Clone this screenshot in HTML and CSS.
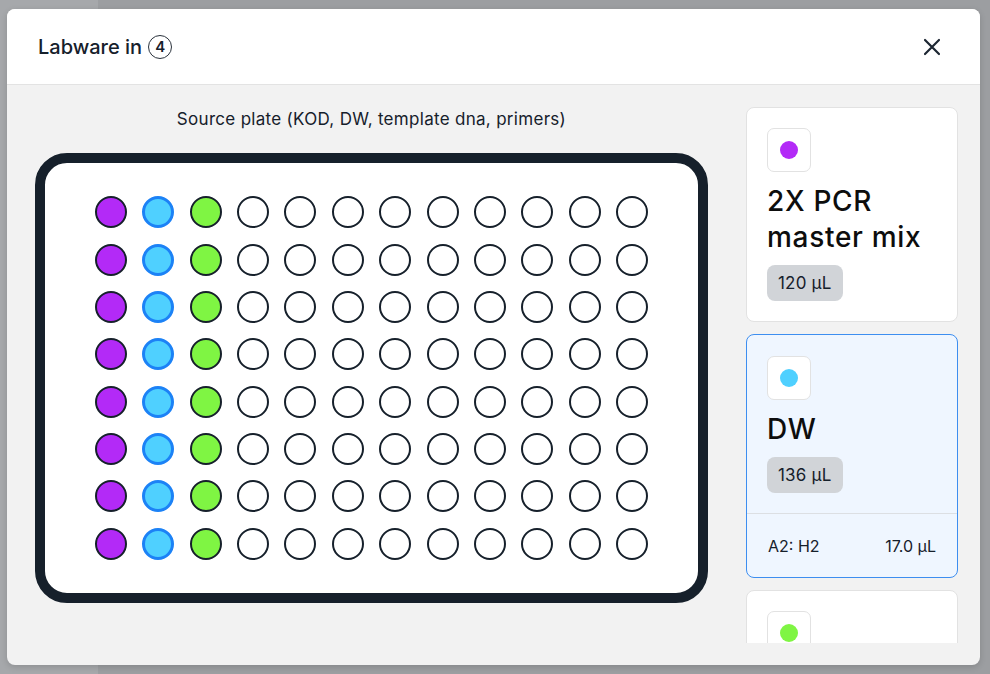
FILE: index.html
```html
<!DOCTYPE html>
<html>
<head>
<meta charset="utf-8">
<link rel="stylesheet" href="styles.css">
</head>
<body>
<div class="backdrop">
  <div class="backdrop-side"></div>
  <div class="backdrop-main"></div>
</div>
<div class="modal">
  <header class="modal-header">
    <h1 class="modal-title">Labware in <span class="badge">4</span></h1>
    <button class="close" aria-label="Close">
      <svg width="18" height="18" viewBox="0 0 18 18"><path d="M2 2L16 16M16 2L2 16" stroke="#1d2733" stroke-width="2.2" stroke-linecap="round"/></svg>
    </button>
  </header>
  <div class="modal-body">
    <section class="plate-panel">
      <div class="plate-caption">Source plate (KOD, DW, template dna, primers)</div>
      <div class="plate">
        <div class="wells" id="wells"></div>
      </div>
    </section>
    <aside class="liquids">
      <div class="liquid-list">
        <div class="card">
          <div class="swatch"><span class="dot purple"></span></div>
          <div class="card-title">2X PCR master mix</div>
          <span class="chip">120 µL</span>
        </div>
        <div class="card selected">
          <div class="card-main">
            <div class="swatch"><span class="dot blue"></span></div>
            <div class="card-title">DW</div>
            <span class="chip">136 µL</span>
          </div>
          <div class="card-footer"><span>A2: H2</span><span>17.0 µL</span></div>
        </div>
        <div class="card card-partial">
          <div class="swatch"><span class="dot green"></span></div>
        </div>
      </div>
    </aside>
  </div>
</div>
<script>
  var w = document.getElementById('wells');
  for (var r = 0; r < 8; r++) {
    for (var c = 0; c < 12; c++) {
      var d = document.createElement('div');
      d.className = 'well' + (c === 0 ? ' w-purple' : c === 1 ? ' w-blue' : c === 2 ? ' w-green' : '');
      w.appendChild(d);
    }
  }
</script>
</body>
</html>
```
FILE: styles.css
```css
* { box-sizing: border-box; }
html, body { margin: 0; padding: 0; }
body {
  width: 990px;
  height: 674px;
  position: relative;
  overflow: hidden;
  font-family: Inter, "Noto Sans", sans-serif;
  color: #111;
}
.backdrop { display: flex; height: 100%; }
.backdrop-side { width: 98px; background: #a6a8ab; }
.backdrop-main { flex: 1; background: #9c9ea1; }

.modal {
  position: absolute;
  left: 7px;
  top: 9px;
  width: 973px;
  height: 656px;
  border-radius: 8px;
  overflow: hidden;
  background: #f2f2f2;
  display: flex;
  flex-direction: column;
  box-shadow: 0 2px 6px rgba(0,0,0,0.15);
}
.modal-header {
  height: 76px;
  flex: none;
  background: #fff;
  border-bottom: 1px solid #e3e3e3;
  display: flex;
  align-items: center;
  justify-content: space-between;
  padding: 0 39px 0 31px;
}
.modal-title {
  margin: 0;
  font-size: 20px;
  font-weight: 500;
  color: #16202b;
  display: flex;
  align-items: center;
  gap: 6px;
  letter-spacing: 0;
}
.badge {
  width: 24px;
  height: 24px;
  border: 1.6px solid #2a323c;
  border-radius: 50%;
  display: inline-flex;
  align-items: center;
  justify-content: center;
  font-size: 15px;
  font-weight: 600;
}
.close {
  border: 0;
  background: none;
  padding: 0;
  width: 18px;
  height: 18px;
  display: flex;
}

.modal-body {
  flex: 1;
  display: flex;
  gap: 10px;
  min-height: 0;
}
.plate-panel {
  width: 729px;
  padding: 22px 28px 0;
  display: flex;
  flex-direction: column;
  align-items: center;
}
.plate-caption {
  font-size: 17px;
  line-height: 24px;
  letter-spacing: 0.3px;
  color: #16202b;
  margin-bottom: 22px;
}
.plate {
  width: 673px;
  height: 450px;
  border: 10px solid #16202b;
  border-radius: 32px;
  background: #fff;
  display: flex;
  align-items: center;
  justify-content: center;
}
.wells {
  display: grid;
  grid-template-columns: repeat(12, 32px);
  grid-auto-rows: 32px;
  column-gap: 15.4px;
  row-gap: 15.3px;
}
.well {
  width: 32px;
  height: 32px;
  border-radius: 50%;
  border: 2.8px solid #16202b;
  background: #fff;
}
.w-purple { background: #b32af7; }
.w-green { background: #7ff543; }
.w-blue { background: #4fd0ff; border: 3.6px solid #1c82f6; }

.liquids {
  width: 212px;
  padding: 22px 0;
  display: flex;
  flex-direction: column;
}
.liquid-list {
  flex: 1;
  min-height: 0;
  overflow: hidden;
  display: flex;
  flex-direction: column;
  gap: 12px;
}
.card {
  flex: none;
  background: #fff;
  border: 1px solid #e2e2e2;
  border-radius: 8px;
  padding: 20px 20px 20px;
}
.card-partial { height: 120px; }
.card.selected {
  background: #eff6ff;
  border: 1.5px solid #3d8ef0;
  padding: 0;
}
.card-main { padding: 21px 20px 20px; }
.swatch {
  width: 44px;
  height: 44px;
  border: 1px solid #e2e2e2;
  border-radius: 7px;
  background: #fff;
  display: flex;
  align-items: center;
  justify-content: center;
}
.dot { width: 18px; height: 18px; border-radius: 50%; }
.dot.purple { background: #b32af7; }
.dot.blue { background: #4fd0ff; }
.dot.green { background: #7ff543; }
.card-title {
  margin-top: 11px;
  font-size: 28px;
  line-height: 36px;
  font-weight: 500;
  color: #0d0d0d;
  letter-spacing: 0.7px;
}
.chip {
  display: inline-flex;
  align-items: center;
  margin-top: 10px;
  height: 36px;
  padding: 0 11px;
  background: #d1d4d8;
  border-radius: 8px;
  font-size: 17px;
  letter-spacing: 0.2px;
  color: #16202b;
}
.card-footer {
  border-top: 1px solid #dcdfe3;
  height: 64px;
  display: flex;
  align-items: center;
  justify-content: space-between;
  padding: 0 21px 0 21px;
  font-size: 16px;
  color: #16202b;
}
```
